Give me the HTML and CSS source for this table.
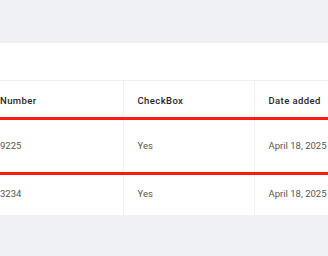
FILE: index.html
```html
<!DOCTYPE html>
<html lang="en">
<head>
    <meta charset="UTF-8">
    <meta name="viewport" content="width=device-width, initial-scale=1.0">
    <title>Records</title>
    <link rel="stylesheet" href="styles.css">
</head>
<body>
    <div class="page">
        <section class="card">
            <div class="card-top"></div>
            <div class="table-wrap">
                <table class="records">
                    <thead>
                        <tr class="head-row">
                            <th class="col-num">Number</th>
                            <th class="col-check">CheckBox</th>
                            <th class="col-date">Date added</th>
                        </tr>
                    </thead>
                    <tbody>
                        <tr class="row row-first">
                            <td>9225</td>
                            <td>Yes</td>
                            <td>April 18, 2025</td>
                        </tr>
                        <tr class="row row-second">
                            <td>3234</td>
                            <td>Yes</td>
                            <td>April 18, 2025</td>
                        </tr>
                    </tbody>
                </table>
            </div>
        </section>
    </div>
</body>
</html>
```

FILE: styles.css
```css
* {
    margin: 0;
    padding: 0;
    box-sizing: border-box;
    font-family: 'Roboto', sans-serif;
}

body {
    background: #f0f1f5;
    color: #2a2a2a;
}

.page {
    padding-top: 43px;
}

.card {
    background: #ffffff;
    height: 172px;
    overflow: hidden;
}

.card-top {
    height: 38px;
    border-bottom: 1px solid #efeff1;
}

.table-wrap {
    overflow: hidden;
}

.records {
    border-collapse: collapse;
    table-layout: fixed;
    margin-left: -15px;
    width: 480px;
}

.records th,
.records td {
    text-align: left;
    padding: 0 14px;
    border-right: 1px solid #f0f0f2;
    white-space: nowrap;
    font-size: 9.5px;
}

.records th:first-child,
.records td:first-child {
    padding-left: 15px;
}

.col-num { width: 138px; }
.col-check { width: 131px; }
.col-date { width: 211px; }

.records th {
    height: 37px;
    padding-top: 4px;
    font-weight: 500;
    color: #262626;
    letter-spacing: 0.4px;
    border-bottom: 3px solid #ff1a0f;
}

.records td {
    color: #555555;
}

.row-first td {
    height: 55px;
    border-bottom: 3px solid #ff1a0f;
}

.row-second td {
    height: 42px;
    padding-bottom: 2px;
}
```
